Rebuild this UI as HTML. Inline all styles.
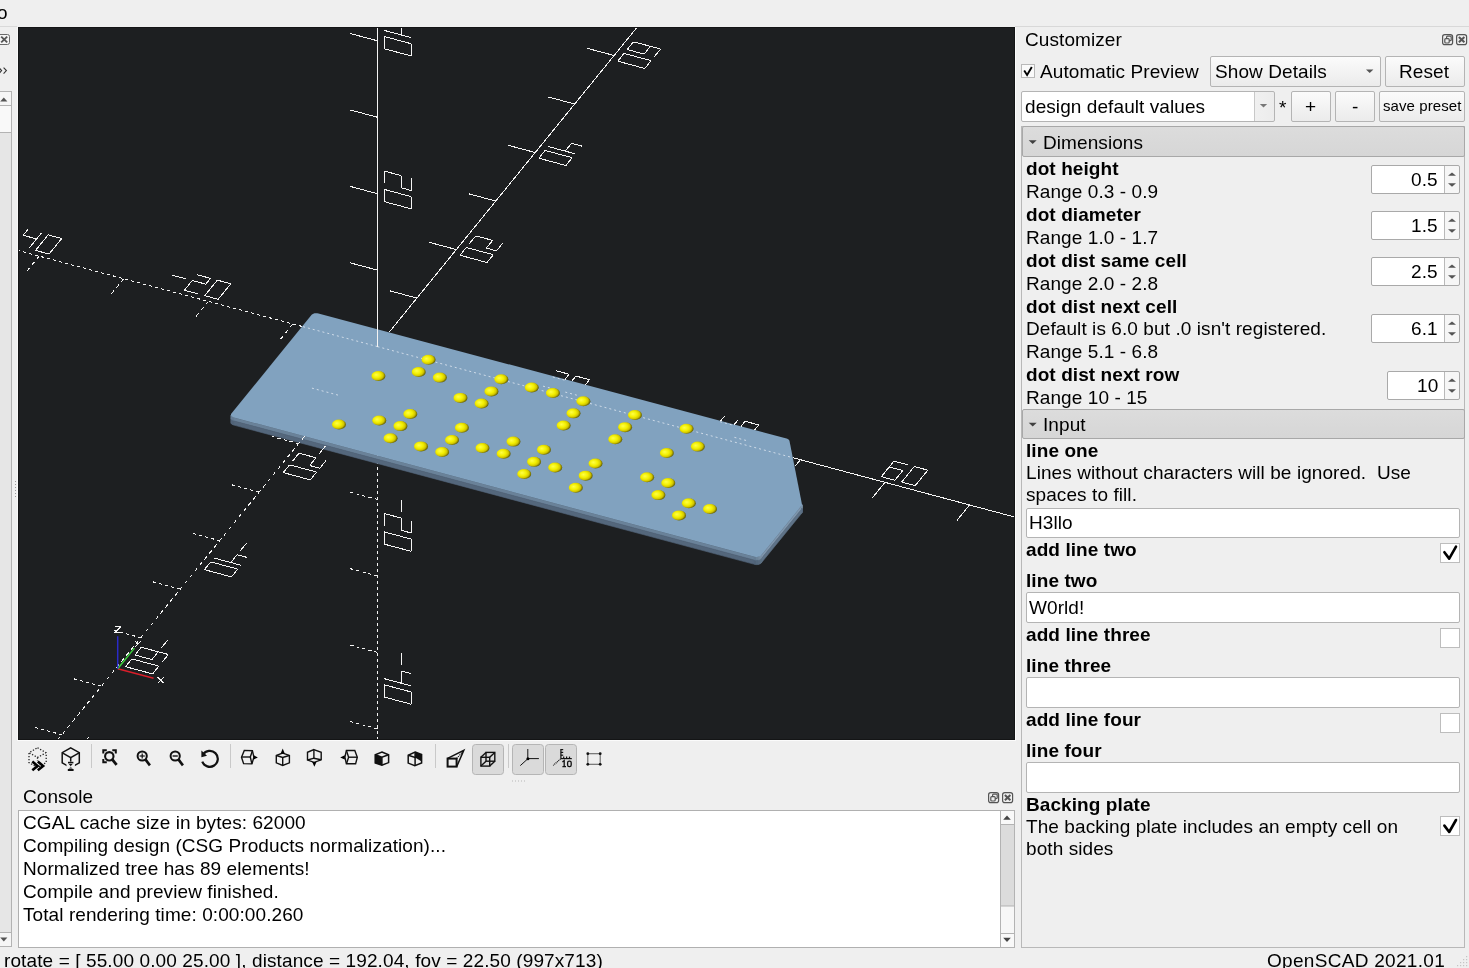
<!DOCTYPE html>
<html><head><meta charset="utf-8">
<style>
html,body{margin:0;padding:0;width:1469px;height:968px;overflow:hidden;background:#efefef;}
body{position:relative;font-family:"Liberation Sans",sans-serif;color:#000;}
.t{position:absolute;font-size:19px;line-height:23px;white-space:pre;letter-spacing:0.08px;will-change:transform;}
.b{font-weight:bold;}
.abs{position:absolute;box-sizing:border-box;}
.btn{position:absolute;box-sizing:border-box;border:1px solid #b4b4b4;border-radius:2px;background:linear-gradient(#fbfbfb,#ebebeb);}
.field{position:absolute;box-sizing:border-box;border:1px solid #b4b4b4;border-radius:2px;background:#fff;}
.chk{position:absolute;box-sizing:border-box;border:1px solid #bdbdbd;background:#fff;}
.grp{position:absolute;box-sizing:border-box;border:1px solid #a8a8a8;border-radius:2px;background:linear-gradient(#dcdcdc,#d6d6d6);}
svg{position:absolute;overflow:visible;}
.spin{position:absolute;box-sizing:border-box;border:1px solid #a9a9a9;border-radius:2px;background:linear-gradient(90deg,#fff 0,#fff calc(100% - 15px),#b9b9b9 calc(100% - 15px),#b9b9b9 calc(100% - 14px),#f6f6f6 calc(100% - 14px));font-size:19px;line-height:23px;}
.spin span{position:absolute;right:21px;top:2px;letter-spacing:0.08px;will-change:transform;}
</style></head><body>
<!-- top partial title -->
<div class="t" style="left:-3px;top:1px;">o</div>

<!-- left strip -->
<div class="abs" style="left:0;top:26px;width:17px;height:1px;background:#d9d9d9;"></div>
<svg width="20" height="968" style="left:0;top:0;position:absolute">
<rect x="-3.5" y="34.5" width="13" height="10" rx="2" fill="#f4f4f4" stroke="#6a6a6a" stroke-width="1"/>
<g stroke="#555" stroke-width="1.8"><line x1="1.2" y1="36.6" x2="7.2" y2="42.4"/><line x1="7.2" y1="36.6" x2="1.2" y2="42.4"/></g>
<g stroke="#333" stroke-width="1.1" fill="none"><polyline points="-1,67.6 1.6,70.6 -1,73.6"/><polyline points="3.6,67.6 6.4,70.6 3.6,73.6"/></g>
<rect x="-1" y="91.5" width="12.5" height="855" fill="#e6e6e6" stroke="#b3b3b3" stroke-width="1"/>
<rect x="-1" y="91.5" width="12.5" height="14" fill="#f6f6f6" stroke="#b3b3b3" stroke-width="1"/>
<polygon points="0.2,101.6 7.4,101.6 3.8,97.6" fill="#555"/>
<rect x="-1" y="105.5" width="12.5" height="27" fill="#f9f9f9" stroke="#b3b3b3" stroke-width="1"/>
<rect x="-1" y="932.5" width="12.5" height="14" fill="#f6f6f6" stroke="#b3b3b3" stroke-width="1"/>
<polygon points="0.2,937.6 7.4,937.6 3.8,941.6" fill="#555"/>
<g fill="#9a9a9a"><rect x="15" y="481" width="1" height="1"/><rect x="15" y="484" width="1" height="1"/><rect x="15" y="487" width="1" height="1"/><rect x="15" y="490" width="1" height="1"/><rect x="15" y="493" width="1" height="1"/><rect x="15" y="496" width="1" height="1"/></g>
</svg>

<!-- viewport -->
<div class="abs" style="left:18px;top:27px;width:997px;height:713px;background:#1d1f21;overflow:hidden;">
<svg width="997" height="713" style="left:0;top:0">
<defs><radialGradient id="dg" cx="0.4" cy="0.44" fx="0.34" fy="0.38" r="0.66">
<stop offset="0" stop-color="#ffff48"/><stop offset="0.45" stop-color="#f2ee00"/><stop offset="0.7" stop-color="#d2c600"/><stop offset="0.88" stop-color="#767000"/><stop offset="1" stop-color="#3a3a12"/></radialGradient>
<linearGradient id="fg" x1="0" y1="0" x2="0" y2="1"><stop offset="0" stop-color="#7b91a8"/><stop offset="1" stop-color="#5e7085"/></linearGradient>
</defs>
<style>.a{stroke:#f4f4f4;stroke-width:1;fill:none;shape-rendering:crispEdges}.d{stroke-dasharray:3 3}.zf{stroke:#e8eef5;stroke-width:1;fill:none;stroke-dasharray:2 3;opacity:0.75}</style>
<line x1="359.47" y1="319.60" x2="359.47" y2="1787.72" class="a" stroke-dasharray="3.00 3.00"/>
<line x1="359.47" y1="396.05" x2="332.39" y2="388.81" class="a" stroke-dasharray="3.11 3.11"/>
<line x1="359.47" y1="472.50" x2="332.39" y2="465.26" class="a" stroke-dasharray="3.11 3.11"/>
<line x1="383.15" y1="472.72" x2="383.15" y2="484.95" class="a" />
<line x1="393.30" y1="493.78" x2="393.30" y2="506.01" class="a" />
<line x1="393.30" y1="506.01" x2="383.15" y2="503.30" class="a" />
<line x1="383.15" y1="503.30" x2="383.15" y2="491.06" class="a" />
<line x1="383.15" y1="491.06" x2="366.23" y2="486.54" class="a" />
<line x1="366.23" y1="486.54" x2="366.23" y2="498.77" class="a" />
<line x1="366.23" y1="504.89" x2="393.30" y2="512.13" class="a" />
<line x1="393.30" y1="512.13" x2="393.30" y2="524.36" class="a" />
<line x1="393.30" y1="524.36" x2="366.23" y2="517.12" class="a" />
<line x1="366.23" y1="517.12" x2="366.23" y2="504.89" class="a" />
<line x1="359.47" y1="548.95" x2="332.39" y2="541.71" class="a" stroke-dasharray="3.11 3.11"/>
<line x1="359.47" y1="625.39" x2="332.39" y2="618.15" class="a" stroke-dasharray="3.11 3.11"/>
<line x1="383.15" y1="625.61" x2="383.15" y2="637.85" class="a" />
<line x1="393.30" y1="646.68" x2="383.15" y2="643.96" class="a" />
<line x1="383.15" y1="643.96" x2="383.15" y2="656.19" class="a" />
<line x1="393.30" y1="658.91" x2="366.23" y2="651.67" class="a" />
<line x1="366.23" y1="657.78" x2="393.30" y2="665.02" class="a" />
<line x1="393.30" y1="665.02" x2="393.30" y2="677.26" class="a" />
<line x1="393.30" y1="677.26" x2="366.23" y2="670.02" class="a" />
<line x1="366.23" y1="670.02" x2="366.23" y2="657.78" class="a" />
<line x1="359.47" y1="701.84" x2="332.39" y2="694.60" class="a" stroke-dasharray="3.11 3.11"/>
<line x1="359.47" y1="778.29" x2="332.39" y2="771.05" class="a" stroke-dasharray="3.11 3.11"/>
<line x1="383.15" y1="778.51" x2="383.15" y2="790.74" class="a" />
<line x1="393.30" y1="811.81" x2="393.30" y2="799.57" class="a" />
<line x1="393.30" y1="799.57" x2="366.23" y2="792.33" class="a" />
<line x1="366.23" y1="792.33" x2="366.23" y2="804.57" class="a" />
<line x1="366.23" y1="804.57" x2="383.15" y2="809.09" class="a" />
<line x1="383.15" y1="809.09" x2="383.15" y2="796.86" class="a" />
<line x1="366.23" y1="810.68" x2="393.30" y2="817.92" class="a" />
<line x1="393.30" y1="817.92" x2="393.30" y2="830.15" class="a" />
<line x1="393.30" y1="830.15" x2="366.23" y2="822.91" class="a" />
<line x1="366.23" y1="822.91" x2="366.23" y2="810.68" class="a" />
<line x1="359.47" y1="854.74" x2="332.39" y2="847.50" class="a" stroke-dasharray="3.11 3.11"/>
<line x1="359.47" y1="931.19" x2="332.39" y2="923.95" class="a" stroke-dasharray="3.11 3.11"/>
<line x1="383.15" y1="931.41" x2="383.15" y2="943.64" class="a" />
<line x1="366.23" y1="945.23" x2="393.30" y2="952.47" class="a" />
<line x1="393.30" y1="952.47" x2="393.30" y2="964.70" class="a" />
<line x1="393.30" y1="964.70" x2="366.23" y2="957.46" class="a" />
<line x1="366.23" y1="957.46" x2="366.23" y2="945.23" class="a" />
<line x1="383.15" y1="949.76" x2="383.15" y2="961.99" class="a" />
<line x1="366.23" y1="963.58" x2="393.30" y2="970.82" class="a" />
<line x1="393.30" y1="970.82" x2="393.30" y2="983.05" class="a" />
<line x1="393.30" y1="983.05" x2="366.23" y2="975.81" class="a" />
<line x1="366.23" y1="975.81" x2="366.23" y2="963.58" class="a" />
<line x1="359.47" y1="1007.64" x2="332.39" y2="1000.40" class="a" stroke-dasharray="3.11 3.11"/>
<line x1="359.47" y1="1084.09" x2="332.39" y2="1076.85" class="a" stroke-dasharray="3.11 3.11"/>
<line x1="383.15" y1="1084.31" x2="383.15" y2="1096.54" class="a" />
<line x1="366.23" y1="1110.36" x2="393.30" y2="1117.60" class="a" />
<line x1="366.23" y1="1116.48" x2="393.30" y2="1123.72" class="a" />
<line x1="393.30" y1="1123.72" x2="393.30" y2="1135.95" class="a" />
<line x1="393.30" y1="1135.95" x2="366.23" y2="1128.71" class="a" />
<line x1="366.23" y1="1128.71" x2="366.23" y2="1116.48" class="a" />
<line x1="366.23" y1="1134.82" x2="393.30" y2="1142.06" class="a" />
<line x1="393.30" y1="1142.06" x2="393.30" y2="1154.30" class="a" />
<line x1="393.30" y1="1154.30" x2="366.23" y2="1147.06" class="a" />
<line x1="366.23" y1="1147.06" x2="366.23" y2="1134.82" class="a" />
<line x1="359.47" y1="1160.54" x2="332.39" y2="1153.30" class="a" stroke-dasharray="3.11 3.11"/>
<line x1="359.47" y1="1236.99" x2="332.39" y2="1229.74" class="a" stroke-dasharray="3.11 3.11"/>
<line x1="383.15" y1="1237.20" x2="383.15" y2="1249.44" class="a" />
<line x1="366.23" y1="1263.26" x2="393.30" y2="1270.50" class="a" />
<line x1="393.30" y1="1276.61" x2="393.30" y2="1288.85" class="a" />
<line x1="393.30" y1="1288.85" x2="383.15" y2="1286.13" class="a" />
<line x1="383.15" y1="1286.13" x2="383.15" y2="1273.90" class="a" />
<line x1="383.15" y1="1273.90" x2="366.23" y2="1269.37" class="a" />
<line x1="366.23" y1="1269.37" x2="366.23" y2="1281.61" class="a" />
<line x1="366.23" y1="1287.72" x2="393.30" y2="1294.96" class="a" />
<line x1="393.30" y1="1294.96" x2="393.30" y2="1307.19" class="a" />
<line x1="393.30" y1="1307.19" x2="366.23" y2="1299.95" class="a" />
<line x1="366.23" y1="1299.95" x2="366.23" y2="1287.72" class="a" />
<line x1="359.47" y1="1313.43" x2="332.39" y2="1306.19" class="a" stroke-dasharray="3.11 3.11"/>
<line x1="359.47" y1="1389.88" x2="332.39" y2="1382.64" class="a" stroke-dasharray="3.11 3.11"/>
<line x1="383.15" y1="1390.10" x2="383.15" y2="1402.33" class="a" />
<line x1="366.23" y1="1416.16" x2="393.30" y2="1423.40" class="a" />
<line x1="393.30" y1="1429.51" x2="383.15" y2="1426.80" class="a" />
<line x1="383.15" y1="1426.80" x2="383.15" y2="1439.03" class="a" />
<line x1="393.30" y1="1441.74" x2="366.23" y2="1434.50" class="a" />
<line x1="366.23" y1="1440.62" x2="393.30" y2="1447.86" class="a" />
<line x1="393.30" y1="1447.86" x2="393.30" y2="1460.09" class="a" />
<line x1="393.30" y1="1460.09" x2="366.23" y2="1452.85" class="a" />
<line x1="366.23" y1="1452.85" x2="366.23" y2="1440.62" class="a" />
<line x1="359.47" y1="1466.33" x2="332.39" y2="1459.09" class="a" stroke-dasharray="3.11 3.11"/>
<line x1="359.47" y1="1542.78" x2="332.39" y2="1535.54" class="a" stroke-dasharray="3.11 3.11"/>
<line x1="383.15" y1="1543.00" x2="383.15" y2="1555.23" class="a" />
<line x1="366.23" y1="1569.05" x2="393.30" y2="1576.29" class="a" />
<line x1="393.30" y1="1594.64" x2="393.30" y2="1582.41" class="a" />
<line x1="393.30" y1="1582.41" x2="366.23" y2="1575.17" class="a" />
<line x1="366.23" y1="1575.17" x2="366.23" y2="1587.40" class="a" />
<line x1="366.23" y1="1587.40" x2="383.15" y2="1591.93" class="a" />
<line x1="383.15" y1="1591.93" x2="383.15" y2="1579.69" class="a" />
<line x1="366.23" y1="1593.52" x2="393.30" y2="1600.76" class="a" />
<line x1="393.30" y1="1600.76" x2="393.30" y2="1612.99" class="a" />
<line x1="393.30" y1="1612.99" x2="366.23" y2="1605.75" class="a" />
<line x1="366.23" y1="1605.75" x2="366.23" y2="1593.52" class="a" />
<line x1="359.47" y1="1619.23" x2="332.39" y2="1611.99" class="a" stroke-dasharray="3.11 3.11"/>
<line x1="359.47" y1="1695.68" x2="332.39" y2="1688.44" class="a" stroke-dasharray="3.11 3.11"/>
<line x1="383.15" y1="1695.90" x2="383.15" y2="1708.13" class="a" />
<line x1="366.23" y1="1721.95" x2="393.30" y2="1729.19" class="a" />
<line x1="366.23" y1="1728.07" x2="393.30" y2="1735.31" class="a" />
<line x1="393.30" y1="1735.31" x2="393.30" y2="1747.54" class="a" />
<line x1="393.30" y1="1747.54" x2="366.23" y2="1740.30" class="a" />
<line x1="366.23" y1="1740.30" x2="366.23" y2="1728.07" class="a" />
<line x1="383.15" y1="1732.59" x2="383.15" y2="1744.82" class="a" />
<line x1="366.23" y1="1746.41" x2="393.30" y2="1753.65" class="a" />
<line x1="393.30" y1="1753.65" x2="393.30" y2="1765.89" class="a" />
<line x1="393.30" y1="1765.89" x2="366.23" y2="1758.65" class="a" />
<line x1="366.23" y1="1758.65" x2="366.23" y2="1746.41" class="a" />
<polygon points="212.93,388.05 213.22,388.80 213.22,392.24 212.93,391.49" fill="#6a8299" stroke="#6a8299" stroke-width="0.6"/>
<polygon points="212.93,391.49 213.22,392.24 213.22,396.45 212.93,395.69" fill="#54677c" stroke="#54677c" stroke-width="0.6"/>
<polygon points="213.22,388.80 213.84,389.48 213.84,392.92 213.22,392.24" fill="#6a8299" stroke="#6a8299" stroke-width="0.6"/>
<polygon points="213.22,392.24 213.84,392.92 213.84,397.13 213.22,396.45" fill="#54677c" stroke="#54677c" stroke-width="0.6"/>
<polygon points="213.84,389.48 214.74,390.05 214.74,393.49 213.84,392.92" fill="#6a8299" stroke="#6a8299" stroke-width="0.6"/>
<polygon points="213.84,392.92 214.74,393.49 214.74,397.69 213.84,397.13" fill="#54677c" stroke="#54677c" stroke-width="0.6"/>
<polygon points="214.74,390.05 215.87,390.46 215.87,393.90 214.74,393.49" fill="#6a8299" stroke="#6a8299" stroke-width="0.6"/>
<polygon points="214.74,393.49 215.87,393.90 215.87,398.11 214.74,397.69" fill="#54677c" stroke="#54677c" stroke-width="0.6"/>
<polygon points="215.87,390.46 736.48,529.70 736.48,533.15 215.87,393.90" fill="#6a8299" stroke="#6a8299" stroke-width="0.6"/>
<polygon points="215.87,393.90 736.48,533.15 736.48,537.35 215.87,398.11" fill="#54677c" stroke="#54677c" stroke-width="0.6"/>
<polygon points="736.48,529.70 737.76,529.94 737.76,533.38 736.48,533.15" fill="#6a8299" stroke="#6a8299" stroke-width="0.6"/>
<polygon points="736.48,533.15 737.76,533.38 737.76,537.58 736.48,537.35" fill="#54677c" stroke="#54677c" stroke-width="0.6"/>
<polygon points="737.76,529.94 739.10,529.97 739.10,533.41 737.76,533.38" fill="#6d859c" stroke="#6d859c" stroke-width="0.6"/>
<polygon points="737.76,533.38 739.10,533.41 739.10,537.61 737.76,537.58" fill="#56697e" stroke="#56697e" stroke-width="0.6"/>
<polygon points="739.10,529.97 740.40,529.80 740.40,533.24 739.10,533.41" fill="#7289a0" stroke="#7289a0" stroke-width="0.6"/>
<polygon points="739.10,533.41 740.40,533.24 740.40,537.45 739.10,537.61" fill="#586b80" stroke="#586b80" stroke-width="0.6"/>
<polygon points="740.40,529.80 741.59,529.45 741.59,532.89 740.40,533.24" fill="#778fa6" stroke="#778fa6" stroke-width="0.6"/>
<polygon points="740.40,533.24 741.59,532.89 741.59,537.09 740.40,537.45" fill="#5b6f84" stroke="#5b6f84" stroke-width="0.6"/>
<polygon points="741.59,529.45 742.58,528.93 742.58,532.37 741.59,532.89" fill="#7c93aa" stroke="#7c93aa" stroke-width="0.6"/>
<polygon points="741.59,532.89 742.58,532.37 742.58,536.57 741.59,537.09" fill="#5d7186" stroke="#5d7186" stroke-width="0.6"/>
<polygon points="742.58,528.93 743.30,528.28 743.30,531.72 742.58,532.37" fill="#7f96ad" stroke="#7f96ad" stroke-width="0.6"/>
<polygon points="742.58,532.37 743.30,531.72 743.30,535.93 742.58,536.57" fill="#5f7388" stroke="#5f7388" stroke-width="0.6"/>
<polygon points="743.30,528.28 783.51,478.82 783.51,482.26 743.30,531.72" fill="#7f96ad" stroke="#7f96ad" stroke-width="0.6"/>
<polygon points="743.30,531.72 783.51,482.26 783.51,486.46 743.30,535.93" fill="#5f7388" stroke="#5f7388" stroke-width="0.6"/>
<polygon points="783.51,478.82 783.69,478.57 783.69,482.01 783.51,482.26" fill="#7f96ad" stroke="#7f96ad" stroke-width="0.6"/>
<polygon points="783.51,482.26 783.69,482.01 783.69,486.22 783.51,486.46" fill="#5f7388" stroke="#5f7388" stroke-width="0.6"/>
<polygon points="783.69,478.57 783.83,478.31 783.83,481.75 783.69,482.01" fill="#7f96ad" stroke="#7f96ad" stroke-width="0.6"/>
<polygon points="783.69,482.01 783.83,481.75 783.83,485.96 783.69,486.22" fill="#5f7388" stroke="#5f7388" stroke-width="0.6"/>
<polygon points="783.83,478.31 783.93,478.05 783.93,481.49 783.83,481.75" fill="#7e95ac" stroke="#7e95ac" stroke-width="0.6"/>
<polygon points="783.83,481.75 783.93,481.49 783.93,485.69 783.83,485.96" fill="#5e7287" stroke="#5e7287" stroke-width="0.6"/>
<polygon points="783.93,478.05 783.98,477.78 783.98,481.22 783.93,481.49" fill="#7d94ab" stroke="#7d94ab" stroke-width="0.6"/>
<polygon points="783.93,481.49 783.98,481.22 783.98,485.43 783.93,485.69" fill="#5e7287" stroke="#5e7287" stroke-width="0.6"/>
<polygon points="783.98,477.78 783.99,477.51 783.99,480.95 783.98,481.22" fill="#7c93aa" stroke="#7c93aa" stroke-width="0.6"/>
<polygon points="783.98,481.22 783.99,480.95 783.99,485.16 783.98,485.43" fill="#5d7186" stroke="#5d7186" stroke-width="0.6"/>
<polygon points="213.39,386.55 212.99,387.28 212.93,388.05 213.22,388.80 213.84,389.48 214.74,390.05 215.87,390.46 736.48,529.70 737.76,529.94 739.10,529.97 740.40,529.80 741.59,529.45 742.58,528.93 743.30,528.28 783.51,478.82 783.69,478.57 783.83,478.31 783.93,478.05 783.98,477.78 783.99,477.51 783.96,477.24 771.50,413.93 771.33,413.44 771.02,412.98 770.57,412.55 770.00,412.16 769.33,411.85 768.57,411.60 300.47,286.40 299.20,286.17 297.86,286.13 296.55,286.30 295.36,286.65 294.37,287.17 293.65,287.82" fill="#81a2bf"/>
<line x1="359.47" y1="319.60" x2="775.07" y2="430.76" class="zf" />
<line x1="359.47" y1="319.60" x2="284.38" y2="299.52" class="zf d" />
<line x1="320.02" y1="368.11" x2="292.95" y2="360.87" class="zf d" />
<line x1="546.44" y1="353.07" x2="532.91" y2="349.45" class="zf" />
<line x1="525.02" y1="359.15" x2="538.55" y2="362.77" class="zf" />
<line x1="558.85" y1="368.20" x2="545.32" y2="364.58" class="zf" />
<line x1="702.07" y1="394.70" x2="715.61" y2="398.32" class="zf" />
<line x1="728.02" y1="413.45" x2="714.49" y2="409.83" class="zf" />
<line x1="775.07" y1="430.76" x2="1983.79" y2="754.05" class="a" />
<line x1="371.30" y1="305.04" x2="1116.90" y2="-612.08" class="a" />
<line x1="359.47" y1="319.60" x2="359.47" y2="-1148.52" class="a" />
<line x1="284.38" y1="299.52" x2="-1264.86" y2="-114.85" class="a" stroke-dasharray="3.11 3.11"/>
<line x1="286.48" y1="409.37" x2="-397.97" y2="1251.28" class="a" stroke-dasharray="3.87 3.87"/>
<line x1="398.91" y1="271.08" x2="371.84" y2="263.84" class="a" />
<line x1="359.47" y1="243.15" x2="332.39" y2="235.91" class="a" />
<line x1="274.88" y1="296.98" x2="262.26" y2="312.50" class="a" stroke-dasharray="3.87 3.87"/>
<line x1="438.35" y1="222.57" x2="411.28" y2="215.33" class="a" />
<line x1="359.47" y1="166.70" x2="332.39" y2="159.46" class="a" />
<line x1="537.64" y1="343.63" x2="551.17" y2="347.25" class="a" />
<line x1="551.17" y1="347.25" x2="546.97" y2="352.42" class="a" />
<line x1="553.90" y1="354.03" x2="557.94" y2="349.06" class="a" />
<line x1="557.94" y1="349.06" x2="571.47" y2="352.68" class="a" />
<line x1="571.47" y1="352.68" x2="567.44" y2="357.65" class="a" />
<line x1="484.80" y1="216.09" x2="478.49" y2="223.86" class="a" />
<line x1="478.49" y1="223.86" x2="468.34" y2="221.14" class="a" />
<line x1="468.34" y1="221.14" x2="474.65" y2="213.38" class="a" />
<line x1="474.65" y1="213.38" x2="457.74" y2="208.86" class="a" />
<line x1="457.74" y1="208.86" x2="451.43" y2="216.62" class="a" />
<line x1="448.27" y1="220.50" x2="475.34" y2="227.74" class="a" />
<line x1="475.34" y1="227.74" x2="469.03" y2="235.50" class="a" />
<line x1="469.03" y1="235.50" x2="441.96" y2="228.26" class="a" />
<line x1="441.96" y1="228.26" x2="448.27" y2="220.50" class="a" />
<line x1="393.30" y1="151.29" x2="393.30" y2="163.52" class="a" />
<line x1="393.30" y1="163.52" x2="383.15" y2="160.80" class="a" />
<line x1="383.15" y1="160.80" x2="383.15" y2="148.57" class="a" />
<line x1="383.15" y1="148.57" x2="366.23" y2="144.05" class="a" />
<line x1="366.23" y1="144.05" x2="366.23" y2="156.28" class="a" />
<line x1="366.23" y1="162.40" x2="393.30" y2="169.64" class="a" />
<line x1="393.30" y1="169.64" x2="393.30" y2="181.87" class="a" />
<line x1="393.30" y1="181.87" x2="366.23" y2="174.63" class="a" />
<line x1="366.23" y1="174.63" x2="366.23" y2="162.40" class="a" />
<line x1="190.30" y1="274.35" x2="177.68" y2="289.88" class="a" stroke-dasharray="3.87 3.87"/>
<line x1="280.58" y1="416.63" x2="253.51" y2="409.39" class="a" stroke-dasharray="3.11 3.11"/>
<line x1="153.98" y1="248.10" x2="167.51" y2="251.72" class="a" />
<line x1="179.01" y1="247.71" x2="192.54" y2="251.33" class="a" />
<line x1="192.54" y1="251.33" x2="187.81" y2="257.15" class="a" />
<line x1="187.81" y1="257.15" x2="174.28" y2="253.53" class="a" />
<line x1="174.28" y1="253.53" x2="166.39" y2="263.23" class="a" />
<line x1="166.39" y1="263.23" x2="179.92" y2="266.85" class="a" />
<line x1="186.69" y1="268.66" x2="199.31" y2="253.14" class="a" />
<line x1="199.31" y1="253.14" x2="212.84" y2="256.76" class="a" />
<line x1="212.84" y1="256.76" x2="200.22" y2="272.28" class="a" />
<line x1="200.22" y1="272.28" x2="186.69" y2="268.66" class="a" />
<line x1="307.42" y1="419.08" x2="301.11" y2="426.84" class="a" />
<line x1="308.11" y1="433.44" x2="301.79" y2="441.20" class="a" />
<line x1="301.79" y1="441.20" x2="291.64" y2="438.49" class="a" />
<line x1="291.64" y1="438.49" x2="297.96" y2="430.73" class="a" />
<line x1="297.96" y1="430.73" x2="281.04" y2="426.20" class="a" />
<line x1="281.04" y1="426.20" x2="274.73" y2="433.96" class="a" />
<line x1="271.57" y1="437.84" x2="298.64" y2="445.08" class="a" />
<line x1="298.64" y1="445.08" x2="292.33" y2="452.85" class="a" />
<line x1="292.33" y1="452.85" x2="265.26" y2="445.61" class="a" />
<line x1="265.26" y1="445.61" x2="271.57" y2="437.84" class="a" />
<line x1="477.79" y1="174.06" x2="450.72" y2="166.81" class="a" />
<line x1="359.47" y1="90.25" x2="332.39" y2="83.01" class="a" />
<line x1="105.72" y1="251.73" x2="93.09" y2="267.26" class="a" stroke-dasharray="3.87 3.87"/>
<line x1="241.14" y1="465.14" x2="214.07" y2="457.90" class="a" stroke-dasharray="3.11 3.11"/>
<line x1="517.23" y1="125.54" x2="490.16" y2="118.30" class="a" />
<line x1="359.47" y1="13.80" x2="332.39" y2="6.56" class="a" />
<line x1="706.81" y1="388.87" x2="702.60" y2="394.05" class="a" />
<line x1="720.34" y1="392.49" x2="716.30" y2="397.46" class="a" />
<line x1="723.07" y1="399.27" x2="727.11" y2="394.30" class="a" />
<line x1="727.11" y1="394.30" x2="740.64" y2="397.92" class="a" />
<line x1="740.64" y1="397.92" x2="736.60" y2="402.89" class="a" />
<line x1="563.69" y1="119.07" x2="553.54" y2="116.35" class="a" />
<line x1="553.54" y1="116.35" x2="547.23" y2="124.11" class="a" />
<line x1="557.38" y1="126.83" x2="530.31" y2="119.59" class="a" />
<line x1="527.15" y1="123.47" x2="554.22" y2="130.71" class="a" />
<line x1="554.22" y1="130.71" x2="547.91" y2="138.47" class="a" />
<line x1="547.91" y1="138.47" x2="520.84" y2="131.23" class="a" />
<line x1="520.84" y1="131.23" x2="527.15" y2="123.47" class="a" />
<line x1="393.30" y1="-1.61" x2="383.15" y2="-4.32" class="a" />
<line x1="383.15" y1="-4.32" x2="383.15" y2="7.91" class="a" />
<line x1="393.30" y1="10.62" x2="366.23" y2="3.38" class="a" />
<line x1="366.23" y1="9.50" x2="393.30" y2="16.74" class="a" />
<line x1="393.30" y1="16.74" x2="393.30" y2="28.97" class="a" />
<line x1="393.30" y1="28.97" x2="366.23" y2="21.73" class="a" />
<line x1="366.23" y1="21.73" x2="366.23" y2="9.50" class="a" />
<line x1="21.14" y1="229.11" x2="8.51" y2="244.64" class="a" stroke-dasharray="3.87 3.87"/>
<line x1="201.70" y1="513.66" x2="174.63" y2="506.42" class="a" stroke-dasharray="3.11 3.11"/>
<line x1="-15.19" y1="202.86" x2="-1.65" y2="206.48" class="a" />
<line x1="9.85" y1="202.46" x2="5.11" y2="208.29" class="a" />
<line x1="5.11" y1="208.29" x2="18.65" y2="211.90" class="a" />
<line x1="23.38" y1="206.08" x2="10.76" y2="221.61" class="a" />
<line x1="17.52" y1="223.42" x2="30.15" y2="207.89" class="a" />
<line x1="30.15" y1="207.89" x2="43.68" y2="211.51" class="a" />
<line x1="43.68" y1="211.51" x2="31.06" y2="227.04" class="a" />
<line x1="31.06" y1="227.04" x2="17.52" y2="223.42" class="a" />
<line x1="228.54" y1="516.11" x2="222.23" y2="523.87" class="a" />
<line x1="229.22" y1="530.47" x2="219.07" y2="527.76" class="a" />
<line x1="219.07" y1="527.76" x2="212.76" y2="535.52" class="a" />
<line x1="222.91" y1="538.23" x2="195.85" y2="530.99" class="a" />
<line x1="192.69" y1="534.87" x2="219.76" y2="542.11" class="a" />
<line x1="219.76" y1="542.11" x2="213.45" y2="549.88" class="a" />
<line x1="213.45" y1="549.88" x2="186.38" y2="542.64" class="a" />
<line x1="186.38" y1="542.64" x2="192.69" y2="534.87" class="a" />
<line x1="782.38" y1="432.71" x2="776.83" y2="439.55" class="a" />
<line x1="556.67" y1="77.03" x2="529.60" y2="69.79" class="a" />
<line x1="359.47" y1="-62.64" x2="332.39" y2="-69.89" class="a" />
<line x1="-63.45" y1="206.49" x2="-76.07" y2="222.01" class="a" stroke-dasharray="3.87 3.87"/>
<line x1="162.26" y1="562.17" x2="135.19" y2="554.93" class="a" stroke-dasharray="3.11 3.11"/>
<line x1="866.96" y1="455.34" x2="854.34" y2="470.86" class="a" />
<line x1="596.12" y1="28.51" x2="569.04" y2="21.27" class="a" />
<line x1="359.47" y1="-139.09" x2="332.39" y2="-146.33" class="a" />
<line x1="889.51" y1="437.74" x2="875.97" y2="434.12" class="a" />
<line x1="875.97" y1="434.12" x2="863.35" y2="449.65" class="a" />
<line x1="863.35" y1="449.65" x2="876.88" y2="453.26" class="a" />
<line x1="876.88" y1="453.26" x2="884.77" y2="443.56" class="a" />
<line x1="884.77" y1="443.56" x2="871.24" y2="439.94" class="a" />
<line x1="883.65" y1="455.07" x2="896.27" y2="439.55" class="a" />
<line x1="896.27" y1="439.55" x2="909.81" y2="443.17" class="a" />
<line x1="909.81" y1="443.17" x2="897.18" y2="458.69" class="a" />
<line x1="897.18" y1="458.69" x2="883.65" y2="455.07" class="a" />
<line x1="636.26" y1="29.80" x2="642.57" y2="22.04" class="a" />
<line x1="642.57" y1="22.04" x2="615.50" y2="14.80" class="a" />
<line x1="615.50" y1="14.80" x2="609.19" y2="22.56" class="a" />
<line x1="609.19" y1="22.56" x2="626.11" y2="27.08" class="a" />
<line x1="626.11" y1="27.08" x2="632.42" y2="19.32" class="a" />
<line x1="606.04" y1="26.44" x2="633.10" y2="33.68" class="a" />
<line x1="633.10" y1="33.68" x2="626.79" y2="41.44" class="a" />
<line x1="626.79" y1="41.44" x2="599.73" y2="34.20" class="a" />
<line x1="599.73" y1="34.20" x2="606.04" y2="26.44" class="a" />
<line x1="393.30" y1="-142.28" x2="393.30" y2="-154.51" class="a" />
<line x1="393.30" y1="-154.51" x2="366.23" y2="-161.75" class="a" />
<line x1="366.23" y1="-161.75" x2="366.23" y2="-149.52" class="a" />
<line x1="366.23" y1="-149.52" x2="383.15" y2="-144.99" class="a" />
<line x1="383.15" y1="-144.99" x2="383.15" y2="-157.22" class="a" />
<line x1="366.23" y1="-143.40" x2="393.30" y2="-136.16" class="a" />
<line x1="393.30" y1="-136.16" x2="393.30" y2="-123.93" class="a" />
<line x1="393.30" y1="-123.93" x2="366.23" y2="-131.17" class="a" />
<line x1="366.23" y1="-131.17" x2="366.23" y2="-143.40" class="a" />
<line x1="-148.03" y1="183.86" x2="-160.65" y2="199.39" class="a" stroke-dasharray="3.87 3.87"/>
<line x1="122.82" y1="610.69" x2="95.74" y2="603.45" class="a" stroke-dasharray="3.11 3.11"/>
<line x1="-184.35" y1="157.61" x2="-170.82" y2="161.23" class="a" />
<line x1="-145.79" y1="160.84" x2="-159.32" y2="157.22" class="a" />
<line x1="-159.32" y1="157.22" x2="-171.94" y2="172.74" class="a" />
<line x1="-171.94" y1="172.74" x2="-158.41" y2="176.36" class="a" />
<line x1="-158.41" y1="176.36" x2="-150.52" y2="166.66" class="a" />
<line x1="-150.52" y1="166.66" x2="-164.05" y2="163.04" class="a" />
<line x1="-151.64" y1="178.17" x2="-139.02" y2="162.65" class="a" />
<line x1="-139.02" y1="162.65" x2="-125.49" y2="166.27" class="a" />
<line x1="-125.49" y1="166.27" x2="-138.11" y2="181.79" class="a" />
<line x1="-138.11" y1="181.79" x2="-151.64" y2="178.17" class="a" />
<line x1="149.66" y1="613.14" x2="143.34" y2="620.90" class="a" />
<line x1="144.03" y1="635.26" x2="150.34" y2="627.50" class="a" />
<line x1="150.34" y1="627.50" x2="123.27" y2="620.26" class="a" />
<line x1="123.27" y1="620.26" x2="116.96" y2="628.02" class="a" />
<line x1="116.96" y1="628.02" x2="133.88" y2="632.55" class="a" />
<line x1="133.88" y1="632.55" x2="140.19" y2="624.78" class="a" />
<line x1="113.81" y1="631.90" x2="140.87" y2="639.14" class="a" />
<line x1="140.87" y1="639.14" x2="134.56" y2="646.90" class="a" />
<line x1="134.56" y1="646.90" x2="107.50" y2="639.67" class="a" />
<line x1="107.50" y1="639.67" x2="113.81" y2="631.90" class="a" />
<line x1="951.55" y1="477.96" x2="938.92" y2="493.49" class="a" />
<line x1="635.56" y1="-20.00" x2="608.49" y2="-27.24" class="a" />
<line x1="359.47" y1="-215.54" x2="332.39" y2="-222.78" class="a" />
<line x1="-232.61" y1="161.24" x2="-245.24" y2="176.77" class="a" stroke-dasharray="3.87 3.87"/>
<line x1="83.38" y1="659.20" x2="56.30" y2="651.96" class="a" stroke-dasharray="3.11 3.11"/>
<line x1="1036.13" y1="500.58" x2="1023.50" y2="516.11" class="a" />
<line x1="675.00" y1="-68.52" x2="647.93" y2="-75.76" class="a" />
<line x1="359.47" y1="-291.99" x2="332.39" y2="-299.23" class="a" />
<line x1="1032.52" y1="494.89" x2="1045.14" y2="479.37" class="a" />
<line x1="1045.14" y1="479.37" x2="1058.67" y2="482.99" class="a" />
<line x1="1058.67" y1="482.99" x2="1046.05" y2="498.51" class="a" />
<line x1="1046.05" y1="498.51" x2="1032.52" y2="494.89" class="a" />
<line x1="1040.41" y1="485.19" x2="1053.94" y2="488.81" class="a" />
<line x1="1052.82" y1="500.32" x2="1065.44" y2="484.80" class="a" />
<line x1="1065.44" y1="484.80" x2="1078.97" y2="488.42" class="a" />
<line x1="1078.97" y1="488.42" x2="1066.35" y2="503.94" class="a" />
<line x1="1066.35" y1="503.94" x2="1052.82" y2="500.32" class="a" />
<line x1="694.39" y1="-82.23" x2="721.45" y2="-74.99" class="a" />
<line x1="721.45" y1="-74.99" x2="715.14" y2="-67.23" class="a" />
<line x1="715.14" y1="-67.23" x2="688.08" y2="-74.47" class="a" />
<line x1="688.08" y1="-74.47" x2="694.39" y2="-82.23" class="a" />
<line x1="711.30" y1="-77.71" x2="704.99" y2="-69.95" class="a" />
<line x1="684.92" y1="-70.59" x2="711.99" y2="-63.35" class="a" />
<line x1="711.99" y1="-63.35" x2="705.68" y2="-55.59" class="a" />
<line x1="705.68" y1="-55.59" x2="678.61" y2="-62.83" class="a" />
<line x1="678.61" y1="-62.83" x2="684.92" y2="-70.59" class="a" />
<line x1="366.23" y1="-314.64" x2="393.30" y2="-307.41" class="a" />
<line x1="393.30" y1="-307.41" x2="393.30" y2="-295.17" class="a" />
<line x1="393.30" y1="-295.17" x2="366.23" y2="-302.41" class="a" />
<line x1="366.23" y1="-302.41" x2="366.23" y2="-314.64" class="a" />
<line x1="383.15" y1="-310.12" x2="383.15" y2="-297.89" class="a" />
<line x1="366.23" y1="-296.30" x2="393.30" y2="-289.06" class="a" />
<line x1="393.30" y1="-289.06" x2="393.30" y2="-276.83" class="a" />
<line x1="393.30" y1="-276.83" x2="366.23" y2="-284.06" class="a" />
<line x1="366.23" y1="-284.06" x2="366.23" y2="-296.30" class="a" />
<line x1="-317.20" y1="138.62" x2="-329.82" y2="154.15" class="a" stroke-dasharray="3.87 3.87"/>
<line x1="43.93" y1="707.72" x2="16.86" y2="700.48" class="a" stroke-dasharray="3.11 3.11"/>
<line x1="-353.52" y1="112.36" x2="-339.99" y2="115.98" class="a" />
<line x1="-341.11" y1="127.50" x2="-328.49" y2="111.97" class="a" />
<line x1="-328.49" y1="111.97" x2="-314.95" y2="115.59" class="a" />
<line x1="-314.95" y1="115.59" x2="-327.57" y2="131.12" class="a" />
<line x1="-327.57" y1="131.12" x2="-341.11" y2="127.50" class="a" />
<line x1="-333.22" y1="117.79" x2="-319.69" y2="121.41" class="a" />
<line x1="-320.81" y1="132.93" x2="-308.19" y2="117.40" class="a" />
<line x1="-308.19" y1="117.40" x2="-294.65" y2="121.02" class="a" />
<line x1="-294.65" y1="121.02" x2="-307.27" y2="136.55" class="a" />
<line x1="-307.27" y1="136.55" x2="-320.81" y2="132.93" class="a" />
<line x1="70.77" y1="710.17" x2="64.46" y2="717.93" class="a" />
<line x1="44.39" y1="717.29" x2="71.46" y2="724.53" class="a" />
<line x1="71.46" y1="724.53" x2="65.15" y2="732.29" class="a" />
<line x1="65.15" y1="732.29" x2="38.08" y2="725.05" class="a" />
<line x1="38.08" y1="725.05" x2="44.39" y2="717.29" class="a" />
<line x1="61.31" y1="721.81" x2="55.00" y2="729.58" class="a" />
<line x1="34.92" y1="728.93" x2="61.99" y2="736.17" class="a" />
<line x1="61.99" y1="736.17" x2="55.68" y2="743.93" class="a" />
<line x1="55.68" y1="743.93" x2="28.61" y2="736.70" class="a" />
<line x1="28.61" y1="736.70" x2="34.92" y2="728.93" class="a" />
<line x1="1120.71" y1="523.20" x2="1108.09" y2="538.73" class="a" />
<line x1="714.44" y1="-117.03" x2="687.37" y2="-124.27" class="a" />
<line x1="359.47" y1="-368.44" x2="332.39" y2="-375.68" class="a" />
<line x1="-401.78" y1="115.99" x2="-414.40" y2="131.52" class="a" stroke-dasharray="3.87 3.87"/>
<line x1="4.49" y1="756.23" x2="-22.58" y2="748.99" class="a" stroke-dasharray="3.11 3.11"/>
<line x1="1205.29" y1="545.83" x2="1192.67" y2="561.36" class="a" />
<line x1="753.88" y1="-165.55" x2="726.81" y2="-172.79" class="a" />
<line x1="359.47" y1="-444.89" x2="332.39" y2="-452.13" class="a" />
<line x1="1215.22" y1="543.76" x2="1227.84" y2="528.23" class="a" />
<line x1="1221.98" y1="545.57" x2="1234.60" y2="530.04" class="a" />
<line x1="1234.60" y1="530.04" x2="1248.14" y2="533.66" class="a" />
<line x1="1248.14" y1="533.66" x2="1235.52" y2="549.19" class="a" />
<line x1="1235.52" y1="549.19" x2="1221.98" y2="545.57" class="a" />
<line x1="1242.28" y1="551.00" x2="1254.90" y2="535.47" class="a" />
<line x1="1254.90" y1="535.47" x2="1268.44" y2="539.09" class="a" />
<line x1="1268.44" y1="539.09" x2="1255.82" y2="554.61" class="a" />
<line x1="1255.82" y1="554.61" x2="1242.28" y2="551.00" class="a" />
<line x1="776.43" y1="-183.14" x2="803.49" y2="-175.90" class="a" />
<line x1="773.27" y1="-179.26" x2="800.34" y2="-172.02" class="a" />
<line x1="800.34" y1="-172.02" x2="794.03" y2="-164.26" class="a" />
<line x1="794.03" y1="-164.26" x2="766.96" y2="-171.50" class="a" />
<line x1="766.96" y1="-171.50" x2="773.27" y2="-179.26" class="a" />
<line x1="763.80" y1="-167.62" x2="790.87" y2="-160.38" class="a" />
<line x1="790.87" y1="-160.38" x2="784.56" y2="-152.62" class="a" />
<line x1="784.56" y1="-152.62" x2="757.49" y2="-159.86" class="a" />
<line x1="757.49" y1="-159.86" x2="763.80" y2="-167.62" class="a" />
<line x1="366.23" y1="-473.66" x2="393.30" y2="-466.42" class="a" />
<line x1="366.23" y1="-467.54" x2="393.30" y2="-460.30" class="a" />
<line x1="393.30" y1="-460.30" x2="393.30" y2="-448.07" class="a" />
<line x1="393.30" y1="-448.07" x2="366.23" y2="-455.31" class="a" />
<line x1="366.23" y1="-455.31" x2="366.23" y2="-467.54" class="a" />
<line x1="366.23" y1="-449.19" x2="393.30" y2="-441.95" class="a" />
<line x1="393.30" y1="-441.95" x2="393.30" y2="-429.72" class="a" />
<line x1="393.30" y1="-429.72" x2="366.23" y2="-436.96" class="a" />
<line x1="366.23" y1="-436.96" x2="366.23" y2="-449.19" class="a" />
<line x1="-486.36" y1="93.37" x2="-498.99" y2="108.90" class="a" stroke-dasharray="3.87 3.87"/>
<line x1="-34.95" y1="804.75" x2="-62.02" y2="797.51" class="a" stroke-dasharray="3.11 3.11"/>
<line x1="-542.98" y1="61.69" x2="-529.45" y2="65.31" class="a" />
<line x1="-517.04" y1="80.44" x2="-504.42" y2="64.92" class="a" />
<line x1="-510.27" y1="82.25" x2="-497.65" y2="66.73" class="a" />
<line x1="-497.65" y1="66.73" x2="-484.12" y2="70.35" class="a" />
<line x1="-484.12" y1="70.35" x2="-496.74" y2="85.87" class="a" />
<line x1="-496.74" y1="85.87" x2="-510.27" y2="82.25" class="a" />
<line x1="-489.97" y1="87.68" x2="-477.35" y2="72.16" class="a" />
<line x1="-477.35" y1="72.16" x2="-463.82" y2="75.78" class="a" />
<line x1="-463.82" y1="75.78" x2="-476.44" y2="91.30" class="a" />
<line x1="-476.44" y1="91.30" x2="-489.97" y2="87.68" class="a" />
<line x1="-8.11" y1="807.20" x2="-14.42" y2="814.96" class="a" />
<line x1="-40.80" y1="822.08" x2="-13.74" y2="829.32" class="a" />
<line x1="-43.96" y1="825.96" x2="-16.89" y2="833.20" class="a" />
<line x1="-16.89" y1="833.20" x2="-23.20" y2="840.96" class="a" />
<line x1="-23.20" y1="840.96" x2="-50.27" y2="833.72" class="a" />
<line x1="-50.27" y1="833.72" x2="-43.96" y2="825.96" class="a" />
<line x1="-53.43" y1="837.61" x2="-26.36" y2="844.84" class="a" />
<line x1="-26.36" y1="844.84" x2="-32.67" y2="852.61" class="a" />
<line x1="-32.67" y1="852.61" x2="-59.74" y2="845.37" class="a" />
<line x1="-59.74" y1="845.37" x2="-53.43" y2="837.61" class="a" />
<line x1="1289.88" y1="568.45" x2="1277.25" y2="583.98" class="a" />
<line x1="793.32" y1="-214.06" x2="766.25" y2="-221.30" class="a" />
<line x1="359.47" y1="-521.34" x2="332.39" y2="-528.58" class="a" />
<line x1="-570.94" y1="70.75" x2="-583.57" y2="86.28" class="a" stroke-dasharray="3.87 3.87"/>
<line x1="-74.39" y1="853.26" x2="-101.46" y2="846.02" class="a" stroke-dasharray="3.11 3.11"/>
<line x1="1374.46" y1="591.07" x2="1361.84" y2="606.60" class="a" />
<line x1="832.77" y1="-262.58" x2="805.69" y2="-269.82" class="a" />
<line x1="359.47" y1="-597.79" x2="332.39" y2="-605.03" class="a" />
<line x1="1384.38" y1="589.00" x2="1397.00" y2="573.48" class="a" />
<line x1="1403.77" y1="575.29" x2="1417.30" y2="578.91" class="a" />
<line x1="1417.30" y1="578.91" x2="1412.57" y2="584.73" class="a" />
<line x1="1412.57" y1="584.73" x2="1399.04" y2="581.11" class="a" />
<line x1="1399.04" y1="581.11" x2="1391.15" y2="590.81" class="a" />
<line x1="1391.15" y1="590.81" x2="1404.68" y2="594.43" class="a" />
<line x1="1411.45" y1="596.24" x2="1424.07" y2="580.72" class="a" />
<line x1="1424.07" y1="580.72" x2="1437.60" y2="584.34" class="a" />
<line x1="1437.60" y1="584.34" x2="1424.98" y2="599.86" class="a" />
<line x1="1424.98" y1="599.86" x2="1411.45" y2="596.24" class="a" />
<line x1="855.31" y1="-280.17" x2="882.37" y2="-272.93" class="a" />
<line x1="879.22" y1="-269.05" x2="872.91" y2="-261.29" class="a" />
<line x1="872.91" y1="-261.29" x2="862.76" y2="-264.00" class="a" />
<line x1="862.76" y1="-264.00" x2="869.07" y2="-271.77" class="a" />
<line x1="869.07" y1="-271.77" x2="852.15" y2="-276.29" class="a" />
<line x1="852.15" y1="-276.29" x2="845.84" y2="-268.53" class="a" />
<line x1="842.69" y1="-264.65" x2="869.75" y2="-257.41" class="a" />
<line x1="869.75" y1="-257.41" x2="863.44" y2="-249.65" class="a" />
<line x1="863.44" y1="-249.65" x2="836.38" y2="-256.89" class="a" />
<line x1="836.38" y1="-256.89" x2="842.69" y2="-264.65" class="a" />
<line x1="366.23" y1="-626.56" x2="393.30" y2="-619.32" class="a" />
<line x1="393.30" y1="-613.20" x2="393.30" y2="-600.97" class="a" />
<line x1="393.30" y1="-600.97" x2="383.15" y2="-603.68" class="a" />
<line x1="383.15" y1="-603.68" x2="383.15" y2="-615.91" class="a" />
<line x1="383.15" y1="-615.91" x2="366.23" y2="-620.44" class="a" />
<line x1="366.23" y1="-620.44" x2="366.23" y2="-608.21" class="a" />
<line x1="366.23" y1="-602.09" x2="393.30" y2="-594.85" class="a" />
<line x1="393.30" y1="-594.85" x2="393.30" y2="-582.62" class="a" />
<line x1="393.30" y1="-582.62" x2="366.23" y2="-589.86" class="a" />
<line x1="366.23" y1="-589.86" x2="366.23" y2="-602.09" class="a" />
<line x1="-655.53" y1="48.13" x2="-668.15" y2="63.65" class="a" stroke-dasharray="3.87 3.87"/>
<line x1="-113.83" y1="901.78" x2="-140.91" y2="894.53" class="a" stroke-dasharray="3.11 3.11"/>
<line x1="-712.15" y1="16.44" x2="-698.62" y2="20.06" class="a" />
<line x1="-686.20" y1="35.20" x2="-673.58" y2="19.67" class="a" />
<line x1="-666.82" y1="21.48" x2="-653.28" y2="25.10" class="a" />
<line x1="-653.28" y1="25.10" x2="-658.02" y2="30.92" class="a" />
<line x1="-658.02" y1="30.92" x2="-671.55" y2="27.30" class="a" />
<line x1="-671.55" y1="27.30" x2="-679.44" y2="37.01" class="a" />
<line x1="-679.44" y1="37.01" x2="-665.90" y2="40.63" class="a" />
<line x1="-659.14" y1="42.44" x2="-646.52" y2="26.91" class="a" />
<line x1="-646.52" y1="26.91" x2="-632.98" y2="30.53" class="a" />
<line x1="-632.98" y1="30.53" x2="-645.60" y2="46.06" class="a" />
<line x1="-645.60" y1="46.06" x2="-659.14" y2="42.44" class="a" />
<line x1="-86.99" y1="904.23" x2="-93.31" y2="911.99" class="a" />
<line x1="-119.69" y1="919.11" x2="-92.62" y2="926.35" class="a" />
<line x1="-95.78" y1="930.23" x2="-102.09" y2="937.99" class="a" />
<line x1="-102.09" y1="937.99" x2="-112.24" y2="935.28" class="a" />
<line x1="-112.24" y1="935.28" x2="-105.93" y2="927.52" class="a" />
<line x1="-105.93" y1="927.52" x2="-122.84" y2="922.99" class="a" />
<line x1="-122.84" y1="922.99" x2="-129.15" y2="930.75" class="a" />
<line x1="-132.31" y1="934.63" x2="-105.24" y2="941.87" class="a" />
<line x1="-105.24" y1="941.87" x2="-111.55" y2="949.64" class="a" />
<line x1="-111.55" y1="949.64" x2="-138.62" y2="942.40" class="a" />
<line x1="-138.62" y1="942.40" x2="-132.31" y2="934.63" class="a" />
<line x1="1459.04" y1="613.70" x2="1446.42" y2="629.22" class="a" />
<line x1="872.21" y1="-311.09" x2="845.13" y2="-318.33" class="a" />
<line x1="359.47" y1="-674.23" x2="332.39" y2="-681.48" class="a" />
<line x1="-740.11" y1="25.50" x2="-752.73" y2="41.03" class="a" stroke-dasharray="3.87 3.87"/>
<line x1="-153.27" y1="950.29" x2="-180.35" y2="943.05" class="a" stroke-dasharray="3.11 3.11"/>
<line x1="1543.62" y1="636.32" x2="1531.00" y2="651.85" class="a" />
<line x1="911.65" y1="-359.61" x2="884.58" y2="-366.85" class="a" />
<line x1="359.47" y1="-750.68" x2="332.39" y2="-757.92" class="a" />
<line x1="1553.55" y1="634.25" x2="1566.17" y2="618.72" class="a" />
<line x1="1572.93" y1="620.53" x2="1568.20" y2="626.35" class="a" />
<line x1="1568.20" y1="626.35" x2="1581.73" y2="629.97" class="a" />
<line x1="1586.47" y1="624.15" x2="1573.85" y2="639.68" class="a" />
<line x1="1580.61" y1="641.49" x2="1593.23" y2="625.96" class="a" />
<line x1="1593.23" y1="625.96" x2="1606.77" y2="629.58" class="a" />
<line x1="1606.77" y1="629.58" x2="1594.15" y2="645.11" class="a" />
<line x1="1594.15" y1="645.11" x2="1580.61" y2="641.49" class="a" />
<line x1="934.19" y1="-377.20" x2="961.26" y2="-369.96" class="a" />
<line x1="958.10" y1="-366.08" x2="947.95" y2="-368.80" class="a" />
<line x1="947.95" y1="-368.80" x2="941.64" y2="-361.03" class="a" />
<line x1="951.79" y1="-358.32" x2="924.73" y2="-365.56" class="a" />
<line x1="921.57" y1="-361.68" x2="948.64" y2="-354.44" class="a" />
<line x1="948.64" y1="-354.44" x2="942.33" y2="-346.68" class="a" />
<line x1="942.33" y1="-346.68" x2="915.26" y2="-353.91" class="a" />
<line x1="915.26" y1="-353.91" x2="921.57" y2="-361.68" class="a" />
<line x1="366.23" y1="-779.45" x2="393.30" y2="-772.21" class="a" />
<line x1="393.30" y1="-766.10" x2="383.15" y2="-768.81" class="a" />
<line x1="383.15" y1="-768.81" x2="383.15" y2="-756.58" class="a" />
<line x1="393.30" y1="-753.87" x2="366.23" y2="-761.11" class="a" />
<line x1="366.23" y1="-754.99" x2="393.30" y2="-747.75" class="a" />
<line x1="393.30" y1="-747.75" x2="393.30" y2="-735.52" class="a" />
<line x1="393.30" y1="-735.52" x2="366.23" y2="-742.76" class="a" />
<line x1="366.23" y1="-742.76" x2="366.23" y2="-754.99" class="a" />
<line x1="-824.69" y1="2.88" x2="-837.32" y2="18.41" class="a" stroke-dasharray="3.87 3.87"/>
<line x1="-192.72" y1="998.80" x2="-219.79" y2="991.56" class="a" stroke-dasharray="3.11 3.11"/>
<line x1="-881.31" y1="-28.80" x2="-867.78" y2="-25.18" class="a" />
<line x1="-855.37" y1="-10.05" x2="-842.75" y2="-25.57" class="a" />
<line x1="-835.98" y1="-23.76" x2="-840.72" y2="-17.94" class="a" />
<line x1="-840.72" y1="-17.94" x2="-827.18" y2="-14.32" class="a" />
<line x1="-822.45" y1="-20.14" x2="-835.07" y2="-4.62" class="a" />
<line x1="-828.30" y1="-2.81" x2="-815.68" y2="-18.33" class="a" />
<line x1="-815.68" y1="-18.33" x2="-802.15" y2="-14.72" class="a" />
<line x1="-802.15" y1="-14.72" x2="-814.77" y2="0.81" class="a" />
<line x1="-814.77" y1="0.81" x2="-828.30" y2="-2.81" class="a" />
<line x1="-165.88" y1="1001.26" x2="-172.19" y2="1009.02" class="a" />
<line x1="-198.57" y1="1016.14" x2="-171.50" y2="1023.38" class="a" />
<line x1="-174.66" y1="1027.26" x2="-184.81" y2="1024.55" class="a" />
<line x1="-184.81" y1="1024.55" x2="-191.12" y2="1032.31" class="a" />
<line x1="-180.97" y1="1035.02" x2="-208.04" y2="1027.78" class="a" />
<line x1="-211.19" y1="1031.66" x2="-184.13" y2="1038.90" class="a" />
<line x1="-184.13" y1="1038.90" x2="-190.44" y2="1046.67" class="a" />
<line x1="-190.44" y1="1046.67" x2="-217.50" y2="1039.43" class="a" />
<line x1="-217.50" y1="1039.43" x2="-211.19" y2="1031.66" class="a" />
<line x1="1628.21" y1="658.94" x2="1615.58" y2="674.47" class="a" />
<line x1="951.09" y1="-408.12" x2="924.02" y2="-415.36" class="a" />
<line x1="359.47" y1="-827.13" x2="332.39" y2="-834.37" class="a" />
<line x1="-909.28" y1="-19.74" x2="-921.90" y2="-4.21" class="a" stroke-dasharray="3.87 3.87"/>
<line x1="-232.16" y1="1047.32" x2="-259.23" y2="1040.08" class="a" stroke-dasharray="3.11 3.11"/>
<line x1="1712.79" y1="681.56" x2="1700.17" y2="697.09" class="a" />
<line x1="990.53" y1="-456.64" x2="963.46" y2="-463.88" class="a" />
<line x1="359.47" y1="-903.58" x2="332.39" y2="-910.82" class="a" />
<line x1="1722.71" y1="679.49" x2="1735.33" y2="663.97" class="a" />
<line x1="1755.63" y1="669.40" x2="1742.10" y2="665.78" class="a" />
<line x1="1742.10" y1="665.78" x2="1729.48" y2="681.30" class="a" />
<line x1="1729.48" y1="681.30" x2="1743.01" y2="684.92" class="a" />
<line x1="1743.01" y1="684.92" x2="1750.90" y2="675.22" class="a" />
<line x1="1750.90" y1="675.22" x2="1737.37" y2="671.60" class="a" />
<line x1="1749.78" y1="686.73" x2="1762.40" y2="671.21" class="a" />
<line x1="1762.40" y1="671.21" x2="1775.93" y2="674.83" class="a" />
<line x1="1775.93" y1="674.83" x2="1763.31" y2="690.35" class="a" />
<line x1="1763.31" y1="690.35" x2="1749.78" y2="686.73" class="a" />
<line x1="1013.07" y1="-474.23" x2="1040.14" y2="-466.99" class="a" />
<line x1="1030.68" y1="-455.35" x2="1036.99" y2="-463.11" class="a" />
<line x1="1036.99" y1="-463.11" x2="1009.92" y2="-470.35" class="a" />
<line x1="1009.92" y1="-470.35" x2="1003.61" y2="-462.59" class="a" />
<line x1="1003.61" y1="-462.59" x2="1020.53" y2="-458.06" class="a" />
<line x1="1020.53" y1="-458.06" x2="1026.84" y2="-465.83" class="a" />
<line x1="1000.45" y1="-458.71" x2="1027.52" y2="-451.47" class="a" />
<line x1="1027.52" y1="-451.47" x2="1021.21" y2="-443.70" class="a" />
<line x1="1021.21" y1="-443.70" x2="994.14" y2="-450.94" class="a" />
<line x1="994.14" y1="-450.94" x2="1000.45" y2="-458.71" class="a" />
<line x1="366.23" y1="-932.35" x2="393.30" y2="-925.11" class="a" />
<line x1="393.30" y1="-906.76" x2="393.30" y2="-919.00" class="a" />
<line x1="393.30" y1="-919.00" x2="366.23" y2="-926.23" class="a" />
<line x1="366.23" y1="-926.23" x2="366.23" y2="-914.00" class="a" />
<line x1="366.23" y1="-914.00" x2="383.15" y2="-909.48" class="a" />
<line x1="383.15" y1="-909.48" x2="383.15" y2="-921.71" class="a" />
<line x1="366.23" y1="-907.89" x2="393.30" y2="-900.65" class="a" />
<line x1="393.30" y1="-900.65" x2="393.30" y2="-888.42" class="a" />
<line x1="393.30" y1="-888.42" x2="366.23" y2="-895.66" class="a" />
<line x1="366.23" y1="-895.66" x2="366.23" y2="-907.89" class="a" />
<line x1="-993.86" y1="-42.36" x2="-1006.48" y2="-26.84" class="a" stroke-dasharray="3.87 3.87"/>
<line x1="-271.60" y1="1095.83" x2="-298.67" y2="1088.59" class="a" stroke-dasharray="3.11 3.11"/>
<line x1="-1050.48" y1="-74.05" x2="-1036.95" y2="-70.43" class="a" />
<line x1="-1024.54" y1="-55.29" x2="-1011.91" y2="-70.82" class="a" />
<line x1="-991.61" y1="-65.39" x2="-1005.15" y2="-69.01" class="a" />
<line x1="-1005.15" y1="-69.01" x2="-1017.77" y2="-53.49" class="a" />
<line x1="-1017.77" y1="-53.49" x2="-1004.24" y2="-49.87" class="a" />
<line x1="-1004.24" y1="-49.87" x2="-996.35" y2="-59.57" class="a" />
<line x1="-996.35" y1="-59.57" x2="-1009.88" y2="-63.19" class="a" />
<line x1="-997.47" y1="-48.06" x2="-984.85" y2="-63.58" class="a" />
<line x1="-984.85" y1="-63.58" x2="-971.31" y2="-59.96" class="a" />
<line x1="-971.31" y1="-59.96" x2="-983.94" y2="-44.44" class="a" />
<line x1="-983.94" y1="-44.44" x2="-997.47" y2="-48.06" class="a" />
<line x1="-244.76" y1="1098.29" x2="-251.07" y2="1106.05" class="a" />
<line x1="-277.45" y1="1113.17" x2="-250.39" y2="1120.41" class="a" />
<line x1="-259.85" y1="1132.05" x2="-253.54" y2="1124.29" class="a" />
<line x1="-253.54" y1="1124.29" x2="-280.61" y2="1117.05" class="a" />
<line x1="-280.61" y1="1117.05" x2="-286.92" y2="1124.81" class="a" />
<line x1="-286.92" y1="1124.81" x2="-270.00" y2="1129.34" class="a" />
<line x1="-270.00" y1="1129.34" x2="-263.69" y2="1121.57" class="a" />
<line x1="-290.08" y1="1128.69" x2="-263.01" y2="1135.93" class="a" />
<line x1="-263.01" y1="1135.93" x2="-269.32" y2="1143.70" class="a" />
<line x1="-269.32" y1="1143.70" x2="-296.39" y2="1136.46" class="a" />
<line x1="-296.39" y1="1136.46" x2="-290.08" y2="1128.69" class="a" />
<line x1="1797.37" y1="704.19" x2="1784.75" y2="719.71" class="a" />
<line x1="1029.97" y1="-505.15" x2="1002.90" y2="-512.39" class="a" />
<line x1="359.47" y1="-980.03" x2="332.39" y2="-987.27" class="a" />
<line x1="-1078.44" y1="-64.99" x2="-1091.06" y2="-49.46" class="a" stroke-dasharray="3.87 3.87"/>
<line x1="-311.04" y1="1144.35" x2="-338.11" y2="1137.11" class="a" stroke-dasharray="3.11 3.11"/>
<line x1="1881.96" y1="726.81" x2="1869.33" y2="742.34" class="a" />
<line x1="1069.41" y1="-553.66" x2="1042.34" y2="-560.91" class="a" />
<line x1="359.47" y1="-1056.48" x2="332.39" y2="-1063.72" class="a" />
<line x1="1891.88" y1="724.74" x2="1904.50" y2="709.21" class="a" />
<line x1="1898.64" y1="726.55" x2="1911.27" y2="711.02" class="a" />
<line x1="1911.27" y1="711.02" x2="1924.80" y2="714.64" class="a" />
<line x1="1924.80" y1="714.64" x2="1912.18" y2="730.17" class="a" />
<line x1="1912.18" y1="730.17" x2="1898.64" y2="726.55" class="a" />
<line x1="1906.53" y1="716.84" x2="1920.07" y2="720.46" class="a" />
<line x1="1918.94" y1="731.98" x2="1931.57" y2="716.45" class="a" />
<line x1="1931.57" y1="716.45" x2="1945.10" y2="720.07" class="a" />
<line x1="1945.10" y1="720.07" x2="1932.48" y2="735.60" class="a" />
<line x1="1932.48" y1="735.60" x2="1918.94" y2="731.98" class="a" />
<line x1="1091.96" y1="-571.26" x2="1119.02" y2="-564.02" class="a" />
<line x1="1088.80" y1="-567.38" x2="1115.87" y2="-560.14" class="a" />
<line x1="1115.87" y1="-560.14" x2="1109.56" y2="-552.38" class="a" />
<line x1="1109.56" y1="-552.38" x2="1082.49" y2="-559.62" class="a" />
<line x1="1082.49" y1="-559.62" x2="1088.80" y2="-567.38" class="a" />
<line x1="1105.72" y1="-562.85" x2="1099.41" y2="-555.09" class="a" />
<line x1="1079.34" y1="-555.74" x2="1106.40" y2="-548.50" class="a" />
<line x1="1106.40" y1="-548.50" x2="1100.09" y2="-540.73" class="a" />
<line x1="1100.09" y1="-540.73" x2="1073.03" y2="-547.97" class="a" />
<line x1="1073.03" y1="-547.97" x2="1079.34" y2="-555.74" class="a" />
<line x1="366.23" y1="-1085.25" x2="393.30" y2="-1078.01" class="a" />
<line x1="366.23" y1="-1079.13" x2="393.30" y2="-1071.89" class="a" />
<line x1="393.30" y1="-1071.89" x2="393.30" y2="-1059.66" class="a" />
<line x1="393.30" y1="-1059.66" x2="366.23" y2="-1066.90" class="a" />
<line x1="366.23" y1="-1066.90" x2="366.23" y2="-1079.13" class="a" />
<line x1="383.15" y1="-1074.61" x2="383.15" y2="-1062.38" class="a" />
<line x1="366.23" y1="-1060.78" x2="393.30" y2="-1053.55" class="a" />
<line x1="393.30" y1="-1053.55" x2="393.30" y2="-1041.31" class="a" />
<line x1="393.30" y1="-1041.31" x2="366.23" y2="-1048.55" class="a" />
<line x1="366.23" y1="-1048.55" x2="366.23" y2="-1060.78" class="a" />
<line x1="-1163.02" y1="-87.61" x2="-1175.65" y2="-72.08" class="a" stroke-dasharray="3.87 3.87"/>
<line x1="-350.48" y1="1192.86" x2="-377.55" y2="1185.62" class="a" stroke-dasharray="3.11 3.11"/>
<line x1="-1219.65" y1="-119.29" x2="-1206.11" y2="-115.67" class="a" />
<line x1="-1193.70" y1="-100.54" x2="-1181.08" y2="-116.07" class="a" />
<line x1="-1186.93" y1="-98.73" x2="-1174.31" y2="-114.26" class="a" />
<line x1="-1174.31" y1="-114.26" x2="-1160.78" y2="-110.64" class="a" />
<line x1="-1160.78" y1="-110.64" x2="-1173.40" y2="-95.11" class="a" />
<line x1="-1173.40" y1="-95.11" x2="-1186.93" y2="-98.73" class="a" />
<line x1="-1179.05" y1="-108.43" x2="-1165.51" y2="-104.81" class="a" />
<line x1="-1166.63" y1="-93.30" x2="-1154.01" y2="-108.83" class="a" />
<line x1="-1154.01" y1="-108.83" x2="-1140.48" y2="-105.21" class="a" />
<line x1="-1140.48" y1="-105.21" x2="-1153.10" y2="-89.68" class="a" />
<line x1="-1153.10" y1="-89.68" x2="-1166.63" y2="-93.30" class="a" />
<line x1="-323.64" y1="1195.32" x2="-329.95" y2="1203.08" class="a" />
<line x1="-356.34" y1="1210.20" x2="-329.27" y2="1217.44" class="a" />
<line x1="-359.49" y1="1214.08" x2="-332.43" y2="1221.32" class="a" />
<line x1="-332.43" y1="1221.32" x2="-338.74" y2="1229.08" class="a" />
<line x1="-338.74" y1="1229.08" x2="-365.80" y2="1221.84" class="a" />
<line x1="-365.80" y1="1221.84" x2="-359.49" y2="1214.08" class="a" />
<line x1="-342.58" y1="1218.60" x2="-348.89" y2="1226.37" class="a" />
<line x1="-368.96" y1="1225.72" x2="-341.89" y2="1232.96" class="a" />
<line x1="-341.89" y1="1232.96" x2="-348.20" y2="1240.72" class="a" />
<line x1="-348.20" y1="1240.72" x2="-375.27" y2="1233.49" class="a" />
<line x1="-375.27" y1="1233.49" x2="-368.96" y2="1225.72" class="a" />
<ellipse cx="410.58" cy="332.82" rx="7.0" ry="5.0" fill="url(#dg)"/>
<ellipse cx="400.72" cy="344.95" rx="7.0" ry="5.0" fill="url(#dg)"/>
<ellipse cx="360.41" cy="348.93" rx="7.0" ry="5.0" fill="url(#dg)"/>
<ellipse cx="421.87" cy="350.60" rx="7.0" ry="5.0" fill="url(#dg)"/>
<ellipse cx="483.32" cy="352.28" rx="7.0" ry="5.0" fill="url(#dg)"/>
<ellipse cx="513.77" cy="360.42" rx="7.0" ry="5.0" fill="url(#dg)"/>
<ellipse cx="473.46" cy="364.40" rx="7.0" ry="5.0" fill="url(#dg)"/>
<ellipse cx="534.92" cy="366.08" rx="7.0" ry="5.0" fill="url(#dg)"/>
<ellipse cx="442.46" cy="370.88" rx="7.0" ry="5.0" fill="url(#dg)"/>
<ellipse cx="565.37" cy="374.22" rx="7.0" ry="5.0" fill="url(#dg)"/>
<ellipse cx="463.60" cy="376.53" rx="7.0" ry="5.0" fill="url(#dg)"/>
<ellipse cx="555.51" cy="386.35" rx="7.0" ry="5.0" fill="url(#dg)"/>
<ellipse cx="392.29" cy="386.99" rx="7.0" ry="5.0" fill="url(#dg)"/>
<ellipse cx="616.96" cy="388.02" rx="7.0" ry="5.0" fill="url(#dg)"/>
<ellipse cx="361.28" cy="393.46" rx="7.0" ry="5.0" fill="url(#dg)"/>
<ellipse cx="320.97" cy="397.45" rx="7.0" ry="5.0" fill="url(#dg)"/>
<ellipse cx="545.65" cy="398.48" rx="7.0" ry="5.0" fill="url(#dg)"/>
<ellipse cx="382.43" cy="399.12" rx="7.0" ry="5.0" fill="url(#dg)"/>
<ellipse cx="607.10" cy="400.15" rx="7.0" ry="5.0" fill="url(#dg)"/>
<ellipse cx="443.88" cy="400.79" rx="7.0" ry="5.0" fill="url(#dg)"/>
<ellipse cx="668.56" cy="401.82" rx="7.0" ry="5.0" fill="url(#dg)"/>
<ellipse cx="372.57" cy="411.25" rx="7.0" ry="5.0" fill="url(#dg)"/>
<ellipse cx="597.24" cy="412.28" rx="7.0" ry="5.0" fill="url(#dg)"/>
<ellipse cx="434.02" cy="412.92" rx="7.0" ry="5.0" fill="url(#dg)"/>
<ellipse cx="495.48" cy="414.59" rx="7.0" ry="5.0" fill="url(#dg)"/>
<ellipse cx="403.02" cy="419.39" rx="7.0" ry="5.0" fill="url(#dg)"/>
<ellipse cx="679.85" cy="419.60" rx="7.0" ry="5.0" fill="url(#dg)"/>
<ellipse cx="464.47" cy="421.06" rx="7.0" ry="5.0" fill="url(#dg)"/>
<ellipse cx="525.93" cy="422.73" rx="7.0" ry="5.0" fill="url(#dg)"/>
<ellipse cx="424.16" cy="425.05" rx="7.0" ry="5.0" fill="url(#dg)"/>
<ellipse cx="648.84" cy="426.08" rx="7.0" ry="5.0" fill="url(#dg)"/>
<ellipse cx="485.62" cy="426.72" rx="7.0" ry="5.0" fill="url(#dg)"/>
<ellipse cx="516.07" cy="434.86" rx="7.0" ry="5.0" fill="url(#dg)"/>
<ellipse cx="577.52" cy="436.53" rx="7.0" ry="5.0" fill="url(#dg)"/>
<ellipse cx="537.21" cy="440.52" rx="7.0" ry="5.0" fill="url(#dg)"/>
<ellipse cx="506.21" cy="446.99" rx="7.0" ry="5.0" fill="url(#dg)"/>
<ellipse cx="567.66" cy="448.66" rx="7.0" ry="5.0" fill="url(#dg)"/>
<ellipse cx="629.12" cy="450.33" rx="7.0" ry="5.0" fill="url(#dg)"/>
<ellipse cx="650.26" cy="455.99" rx="7.0" ry="5.0" fill="url(#dg)"/>
<ellipse cx="557.80" cy="460.79" rx="7.0" ry="5.0" fill="url(#dg)"/>
<ellipse cx="640.40" cy="468.12" rx="7.0" ry="5.0" fill="url(#dg)"/>
<ellipse cx="670.85" cy="476.26" rx="7.0" ry="5.0" fill="url(#dg)"/>
<ellipse cx="692.00" cy="481.92" rx="7.0" ry="5.0" fill="url(#dg)"/>
<ellipse cx="660.99" cy="488.39" rx="7.0" ry="5.0" fill="url(#dg)"/>
<line x1="99.70" y1="641.70" x2="135.59" y2="651.30" stroke="#d81e2a" stroke-width="1.5"/>
<line x1="99.70" y1="641.70" x2="116.44" y2="621.11" stroke="#3cd03c" stroke-width="1.5"/>
<line x1="99.70" y1="641.70" x2="99.70" y2="609.26" stroke="#2a2ac8" stroke-width="1.5"/>
<line x1="139.77" y1="656.22" x2="145.77" y2="650.22" class="a"/>
<line x1="139.77" y1="650.22" x2="145.77" y2="656.22" class="a"/>
<line x1="116.78" y1="620.00" x2="122.78" y2="614.00" class="a"/>
<line x1="116.78" y1="614.00" x2="119.78" y2="617.00" class="a"/>
<line x1="96.70" y1="605.77" x2="102.70" y2="605.77" class="a"/>
<line x1="96.70" y1="599.77" x2="102.70" y2="599.77" class="a"/>
<line x1="96.70" y1="605.77" x2="102.70" y2="599.77" class="a"/>
</svg>
<div class="abs" style="left:0;top:0;width:997px;height:713px;border:1px solid #141516;"></div>
</div>
<div class="abs" style="left:1015px;top:27px;width:1px;height:714px;background:#fbfbfb;"></div>
<div class="abs" style="left:17px;top:740px;width:999px;height:1px;background:#fbfbfb;"></div>
<div class="abs" style="left:17px;top:27px;width:1px;height:713px;background:#f8f8f8;"></div>

<!-- toolbar -->
<svg width="1469" height="968" style="left:0;top:0;position:absolute">
<g stroke-linecap="butt" stroke-linejoin="miter" fill="none" stroke="#111">
<!-- separators -->
<g stroke="#c9c9c9" stroke-width="1">
<line x1="91.5" y1="744" x2="91.5" y2="768"/><line x1="230.5" y1="744" x2="230.5" y2="768"/><line x1="435.5" y1="744" x2="435.5" y2="768"/><line x1="508.5" y1="744" x2="508.5" y2="768"/>
</g>
<!-- 1 preview: dashed cube + chevrons -->
<g stroke="#222" stroke-width="1.3" stroke-dasharray="1.3 1.7">
<polygon points="37.5,747.7 46.2,752.8 46.2,762.6 37.5,767.5 29.0,762.6 29.0,752.8"/>
<polyline points="29.4,753 37.5,757.4 45.8,753"/><line x1="37.5" y1="757.4" x2="37.5" y2="761"/>
</g>
<g stroke="#000" stroke-width="2.6" stroke-linejoin="miter">
<polyline points="32.3,761.6 37.6,765.9 32.3,770.2"/><polyline points="37.8,761.6 43.1,765.9 37.8,770.2"/>
</g>
<!-- 2 render: cube + hourglass -->
<g stroke="#111" stroke-width="1.5">
<polygon points="70.7,747.8 79.3,752.7 79.3,762.8 70.7,767.6 62.2,762.8 62.2,752.7"/>
<polyline points="62.4,752.8 70.7,757.6 79.1,752.8"/><line x1="70.7" y1="757.6" x2="70.7" y2="762"/>
</g>
<rect x="66.5" y="761.6" width="8.4" height="7.5" fill="#efefef" stroke="none"/>
<g fill="#111" stroke="none">
<rect x="68" y="761.8" width="5.4" height="1.6"/><polygon points="68.8,764 72.6,764 70.7,766.2"/>
<polygon points="70.7,766.6 68.6,769 72.8,769" fill="#777"/><rect x="67.8" y="769" width="5.8" height="2"/>
</g>
<!-- 3 view all -->
<g stroke="#111" stroke-width="2">
<polyline points="103.3,753.4 103.3,750.2 106.8,750.2"/><polyline points="112.3,750.2 115.8,750.2 115.8,753.4"/>
<polyline points="103.3,759 103.3,762.2 106.8,762.2"/>
<circle cx="109.3" cy="756.3" r="4.2" stroke-width="2.1"/>
<line x1="112.2" y1="759.4" x2="116.6" y2="764.8" stroke-width="2.8"/>
</g>
<!-- 4 zoom in -->
<g stroke="#111">
<circle cx="142.2" cy="756" r="4.6" stroke-width="2"/>
<line x1="145.4" y1="759.4" x2="149.9" y2="765.4" stroke-width="2.6"/>
<line x1="139.6" y1="756" x2="144.8" y2="756" stroke-width="1.2"/><line x1="142.2" y1="753.4" x2="142.2" y2="758.6" stroke-width="1.2"/>
</g>
<!-- 5 zoom out -->
<g stroke="#111">
<circle cx="175.2" cy="756" r="4.6" stroke-width="2"/>
<line x1="178.4" y1="759.4" x2="182.9" y2="765.4" stroke-width="2.6"/>
<line x1="172.6" y1="756" x2="177.8" y2="756" stroke-width="1.4"/>
</g>
<!-- 6 reset view -->
<g stroke="#111" stroke-width="2.2">
<path d="M203,754.6 A8,8 0 1 1 202.3,761.6"/>
</g>
<polygon points="201.4,750.4 201.4,757.2 207,755.8" fill="#111" stroke="none"/>
<!-- 7 view right -->
<g stroke="#111" stroke-width="1.4">
<polygon points="241.5,757.2 244.3,750.4 252.4,750.7 253.9,757.2 251.9,763.9 243.6,763.6"/>
<line x1="241.6" y1="757" x2="250.3" y2="757"/><polyline points="252.4,750.8 250.3,757 251.9,763.8"/>
</g>
<polygon points="253.6,755.2 253.6,759.4 257.9,757.6" fill="#000" stroke="none"/>
<!-- 8 view top -->
<g stroke="#111" stroke-width="1.4">
<polygon points="282.7,753.1 289.4,755.4 289.4,762.8 282.7,765.5 276.3,762.8 276.3,755.4"/>
<polyline points="276.5,755.5 282.7,757.5 289.2,755.5"/><line x1="282.7" y1="757.5" x2="282.7" y2="765.3"/>
</g>
<polygon points="280.7,753.4 284.7,753.4 282.7,748.6" fill="#000" stroke="none"/>
<!-- 9 view bottom -->
<g stroke="#111" stroke-width="1.4">
<polygon points="313.9,749.6 321.2,752.3 321.2,759.8 314.2,762.3 307.5,760.1 307.5,752.3"/>
<line x1="313.9" y1="749.8" x2="313.9" y2="758.2"/><polyline points="307.7,760 313.9,758.2 321,759.7"/>
</g>
<polygon points="312.2,762 316.4,762 314.4,766.8" fill="#000" stroke="none"/>
<!-- 10 view left -->
<g stroke="#111" stroke-width="1.4">
<polygon points="344.9,757.2 346.4,750.5 354.8,750.5 357.3,757.2 355.6,763.8 346.4,763.8"/>
<polyline points="346.5,750.6 348.6,757.2 346.5,763.7"/><line x1="348.6" y1="757.2" x2="357.1" y2="757.2"/>
</g>
<polygon points="344.8,755.2 344.8,759.4 340.2,757.5" fill="#000" stroke="none"/>
<!-- 11 view front -->
<polygon points="375.2,754.7 381.9,757.2 381.9,765.3 375.2,762.9" fill="#111" stroke="none"/>
<g stroke="#111" stroke-width="1.5">
<polygon points="381.9,752 388.6,754.7 388.6,762.6 381.9,765.3 375.2,762.9 375.2,754.7"/>
<polyline points="375.3,754.8 381.9,757.2 388.5,754.8"/><line x1="381.9" y1="757.2" x2="381.9" y2="765.2"/>
</g>
<!-- 12 view back -->
<polygon points="415.1,752 421.6,754.4 421.6,761.4 415.1,757.4" fill="#111" stroke="none"/>
<g stroke="#111" stroke-width="1.5">
<polygon points="415.1,752 421.6,754.4 421.6,762.9 414.8,765.6 408.2,763.1 408.2,755.2"/>
<polyline points="408.3,755.3 415.1,757.4 421.5,754.5"/><line x1="415.1" y1="752" x2="415.1" y2="765.4"/>
</g>
<!-- 13 perspective -->
<g stroke="#111">
<rect x="447.6" y="758.6" width="9" height="8" stroke-width="2"/>
<polyline points="447.6,758.4 463.8,750.3 456.8,766.4" stroke-width="1.5"/><line x1="456.6" y1="758.6" x2="463.6" y2="750.6" stroke-width="1.2" stroke-dasharray="1.2 1"/>
</g>
<!-- 14 orthogonal (checked) -->
<rect x="472.5" y="744.5" width="31" height="30" rx="3" fill="#dadada" stroke="#b5b5b5" stroke-width="1"/>
<g stroke="#111" stroke-width="1.4">
<rect x="480.9" y="757.3" width="8.8" height="8.8"/><rect x="486" y="752.4" width="8.8" height="8.8"/>
<line x1="480.9" y1="757.3" x2="486" y2="752.4"/><line x1="489.7" y1="757.3" x2="494.8" y2="752.4"/><line x1="480.9" y1="766.1" x2="486" y2="761.2"/><line x1="489.7" y1="766.1" x2="494.8" y2="761.2"/>
</g>
<!-- 15 axes (checked) -->
<rect x="512.5" y="744.5" width="31" height="30" rx="3" fill="#dadada" stroke="#b5b5b5" stroke-width="1"/>
<g stroke="#111" stroke-width="1">
<line x1="527.8" y1="749" x2="527.8" y2="758.8"/><line x1="527.8" y1="758.6" x2="538.9" y2="758.6"/><line x1="527.8" y1="758.8" x2="520.3" y2="765.6"/>
</g>
<circle cx="527.9" cy="758.8" r="1.5" fill="#000" stroke="none"/>
<!-- 16 scale markers (checked) -->
<rect x="545.5" y="744.5" width="31" height="30" rx="3" fill="#dadada" stroke="#b5b5b5" stroke-width="1"/>
<g stroke="#111" stroke-width="1.2">
<line x1="560.9" y1="749" x2="560.9" y2="758.8"/><line x1="560.7" y1="758.6" x2="571.8" y2="758.6"/>
<line x1="560.9" y1="749.6" x2="563.2" y2="749.6"/><line x1="560.9" y1="752.4" x2="563.2" y2="752.4"/><line x1="560.9" y1="755.2" x2="563.2" y2="755.2"/>
<line x1="563.7" y1="758.6" x2="563.7" y2="756.6"/><line x1="566.6" y1="758.6" x2="566.6" y2="756.6"/><line x1="569.5" y1="758.6" x2="569.5" y2="756.6"/>
<line x1="560.5" y1="759" x2="553.2" y2="765.4" stroke-dasharray="1 0.8"/>
</g>
<g stroke="#111" stroke-width="1.3" fill="none"><polyline points="562.4,762 564.2,760.6 564.2,767"/><line x1="562.4" y1="766.6" x2="566" y2="766.6"/><rect x="567.6" y="761.2" width="3.6" height="5.4" rx="1.6"/></g>
<!-- 17 crosshairs -->
<g stroke="#666" stroke-width="1.1">
<rect x="587.8" y="753.7" width="12.4" height="10.6"/>
</g>
<g fill="#111" stroke="none">
<circle cx="587.8" cy="753.7" r="1.4"/><circle cx="600.2" cy="753.7" r="1.4"/><circle cx="587.8" cy="764.3" r="1.4"/><circle cx="600.2" cy="764.3" r="1.4"/>
</g>
<!-- splitter handle dots -->
<g fill="#b8b8b8" stroke="none">
<rect x="512" y="780.5" width="1" height="1"/><rect x="515" y="780.5" width="1" height="1"/><rect x="518" y="780.5" width="1" height="1"/><rect x="521" y="780.5" width="1" height="1"/><rect x="524" y="780.5" width="1" height="1"/>
</g>
</g>
</svg>


<!-- console -->
<div class="t" style="left:23px;top:785px;">Console</div>
<div class="abs" style="left:18px;top:810px;width:997px;height:138px;border:1px solid #b0b0b0;background:#fff;"></div>
<div class="t" style="left:23px;top:811px;">CGAL cache size in bytes: 62000
Compiling design (CSG Products normalization)...
Normalized tree has 89 elements!
Compile and preview finished.
Total rendering time: 0:00:00.260</div>
<svg width="1469" height="968" style="left:0;top:0;position:absolute">
<!-- console scrollbar -->
<rect x="1000.5" y="810.5" width="14" height="137" fill="#f7f7f7" stroke="#b3b3b3"/>
<rect x="1000.5" y="810.5" width="14" height="14" fill="#f9f9f9" stroke="#b3b3b3"/>
<polygon points="1003.2,819.8 1010.8,819.8 1007,815.6" fill="#444"/>
<rect x="1000.5" y="824.5" width="14" height="81.5" fill="#dcdcdc" stroke="#b3b3b3"/>
<rect x="1000.5" y="933.5" width="14" height="14" fill="#f9f9f9" stroke="#b3b3b3"/>
<polygon points="1003.2,937.8 1010.8,937.8 1007,942" fill="#444"/>
<!-- console float/close -->
<g fill="none" stroke="#555" stroke-width="1.2">
<rect x="988.6" y="792.6" width="10" height="10" rx="2.2"/>
<rect x="1002.6" y="792.6" width="10" height="10" rx="2.2"/>
<rect x="990.8" y="796.6" width="4.4" height="4.4" rx="1"/><path d="M992.6,796.6 v-1.6 a0.9,0.9 0 0 1 0.9,-0.9 h2.8 a0.9,0.9 0 0 1 0.9,0.9 v2.8 a0.9,0.9 0 0 1 -0.9,0.9 h-1.1"/>
</g>
<g stroke="#555" stroke-width="2"><line x1="1004.9" y1="795" x2="1010.4" y2="800.3"/><line x1="1010.4" y1="795" x2="1004.9" y2="800.3"/></g>
<!-- customizer float/close -->
<g fill="none" stroke="#555" stroke-width="1.2">
<rect x="1442.6" y="34.6" width="10" height="10" rx="2.2"/>
<rect x="1456.6" y="34.6" width="10" height="10" rx="2.2"/>
<rect x="1444.8" y="38.6" width="4.4" height="4.4" rx="1"/><path d="M1446.6,38.6 v-1.6 a0.9,0.9 0 0 1 0.9,-0.9 h2.8 a0.9,0.9 0 0 1 0.9,0.9 v2.8 a0.9,0.9 0 0 1 -0.9,0.9 h-1.1"/>
</g>
<g stroke="#555" stroke-width="2"><line x1="1458.9" y1="37" x2="1464.4" y2="42.3"/><line x1="1464.4" y1="37" x2="1458.9" y2="42.3"/></g>
</svg>

<!-- status bar -->
<div class="t" style="left:4px;top:949px;letter-spacing:0.11px;">rotate = [ 55.00 0.00 25.00 ], distance = 192.04, fov = 22.50 (997x713)</div>
<div class="t" style="left:1267px;top:949px;letter-spacing:0.3px;">OpenSCAD 2021.01</div>
<svg width="12" height="14" style="left:1457px;top:954px;position:absolute"><g fill="#c4c4c4"><rect x="9" y="2" width="1.2" height="1.2"/><rect x="6" y="5" width="1.2" height="1.2"/><rect x="9" y="5" width="1.2" height="1.2"/><rect x="3" y="8" width="1.2" height="1.2"/><rect x="6" y="8" width="1.2" height="1.2"/><rect x="9" y="8" width="1.2" height="1.2"/><rect x="0" y="11" width="1.2" height="1.2"/><rect x="3" y="11" width="1.2" height="1.2"/><rect x="6" y="11" width="1.2" height="1.2"/><rect x="9" y="11" width="1.2" height="1.2"/></g></svg>

<!-- customizer -->
<div class="abs" style="left:1015px;top:26px;width:454px;height:1px;background:#d8d8d8;"></div>
<div class="t" style="left:1025px;top:28px;">Customizer</div>
<div class="t" style="left:1040px;top:60px;">Automatic Preview</div>
<div class="btn" style="left:1210px;top:56px;width:171px;height:31px;"></div>
<div class="t" style="left:1215px;top:60px;">Show Details</div>
<div class="btn" style="left:1385px;top:56px;width:80px;height:31px;"></div>
<div class="t" style="left:1399px;top:60px;">Reset</div>

<div class="field" style="left:1021px;top:91px;width:254px;height:31px;background:linear-gradient(90deg,#fff 0,#fff 233px,#f0f0f0 233px,#ececec 100%);"></div>
<div class="abs" style="left:1254px;top:92px;width:1px;height:29px;background:#c8c8c8;"></div>
<div class="t" style="left:1025px;top:95px;">design default values</div>
<div class="t" style="left:1279px;top:96px;">*</div>
<div class="btn" style="left:1291px;top:91px;width:40px;height:31px;"></div>
<div class="t" style="left:1305px;top:95px;">+</div>
<div class="btn" style="left:1335px;top:91px;width:40px;height:31px;"></div>
<div class="t" style="left:1352px;top:95px;">-</div>
<div class="btn" style="left:1379px;top:91px;width:86px;height:31px;"></div>
<div class="t" style="left:1383px;top:97px;font-size:15px;line-height:18px;">save preset</div>

<!-- group frame -->
<div class="abs" style="left:1021px;top:126px;width:444px;height:822px;border:1px solid #b8b8b8;"></div>
<div class="grp" style="left:1022px;top:126px;width:443px;height:31px;"></div>
<div class="t" style="left:1043px;top:131px;">Dimensions</div>

<div class="t b" style="left:1026px;top:157px;">dot height</div>
<div class="t" style="left:1026px;top:180px;">Range 0.3 - 0.9</div>
<div class="t b" style="left:1026px;top:203px;">dot diameter</div>
<div class="t" style="left:1026px;top:226px;">Range 1.0 - 1.7</div>
<div class="t b" style="left:1026px;top:249px;">dot dist same cell</div>
<div class="t" style="left:1026px;top:272px;">Range 2.0 - 2.8</div>
<div class="t b" style="left:1026px;top:295px;">dot dist next cell</div>
<div class="t" style="left:1026px;top:317px;">Default is 6.0 but .0 isn't registered.</div>
<div class="t" style="left:1026px;top:340px;">Range 5.1 - 6.8</div>
<div class="t b" style="left:1026px;top:363px;">dot dist next row</div>
<div class="t" style="left:1026px;top:386px;">Range 10 - 15</div>

<div class="spin" style="left:1371px;top:165px;width:89px;height:29px;"><span>0.5</span></div>
<div class="spin" style="left:1371px;top:211px;width:89px;height:29px;"><span>1.5</span></div>
<div class="spin" style="left:1371px;top:257px;width:89px;height:29px;"><span>2.5</span></div>
<div class="spin" style="left:1371px;top:314px;width:89px;height:29px;"><span>6.1</span></div>
<div class="spin" style="left:1387px;top:371px;width:73px;height:29px;"><span>10</span></div>

<div class="grp" style="left:1022px;top:409px;width:443px;height:30px;"></div>
<div class="t" style="left:1043px;top:413px;">Input</div>
<div class="t b" style="left:1026px;top:439px;">line one</div>
<div class="t" style="left:1026px;top:462px;line-height:22px;">Lines without characters will be ignored.  Use
spaces to fill.</div>
<div class="field" style="left:1026px;top:508px;width:434px;height:30px;"></div>
<div class="t" style="left:1029px;top:511px;">H3llo</div>
<div class="t b" style="left:1026px;top:538px;">add line two</div>
<div class="chk" style="left:1440px;top:543px;width:20px;height:20px;"></div>
<div class="t b" style="left:1026px;top:569px;">line two</div>
<div class="field" style="left:1026px;top:592px;width:434px;height:31px;"></div>
<div class="t" style="left:1029px;top:596px;">W0rld!</div>
<div class="t b" style="left:1026px;top:623px;">add line three</div>
<div class="chk" style="left:1440px;top:628px;width:20px;height:20px;"></div>
<div class="t b" style="left:1026px;top:654px;">line three</div>
<div class="field" style="left:1026px;top:677px;width:434px;height:31px;"></div>
<div class="t b" style="left:1026px;top:708px;">add line four</div>
<div class="chk" style="left:1440px;top:713px;width:20px;height:20px;"></div>
<div class="t b" style="left:1026px;top:739px;">line four</div>
<div class="field" style="left:1026px;top:762px;width:434px;height:31px;"></div>
<div class="t b" style="left:1026px;top:793px;">Backing plate</div>
<div class="t" style="left:1026px;top:816px;line-height:22px;">The backing plate includes an empty cell on
both sides</div>
<div class="chk" style="left:1440px;top:816px;width:20px;height:20px;"></div>

<!-- customizer glyph overlay -->
<svg width="1469" height="968" style="left:0;top:0;position:absolute">
<rect x="1021.5" y="64.5" width="13" height="13" fill="#fafafa" stroke="#b9b9b9"/>
<polyline points="1024.2,70.5 1027.1,75 1031.8,67" fill="none" stroke="#000" stroke-width="1.9"/>
<polygon points="1366,69.4 1373.4,69.4 1369.7,73" fill="#555"/>
<polygon points="1259.8,104 1267.2,104 1263.5,107.6" fill="#777"/>
<polygon points="1028.7,140.2 1036.7,140.2 1032.7,143.9" fill="#404040"/>
<polygon points="1028.7,422.8 1036.7,422.8 1032.7,426.5" fill="#404040"/>
<g fill="none" stroke="#000" stroke-width="2.6" stroke-linecap="round" stroke-linejoin="round">
<polyline points="1444.4,552.2 1449.2,558.6 1456,546.6"/>
<polyline points="1444.4,825.6 1449.2,832 1456,820"/>
</g>
<g fill="#555">
<polygon points="1448,175.8 1456,175.8 1452,172.4"/><polygon points="1448,183.3 1456,183.3 1452,186.7"/>
<polygon points="1448,221.8 1456,221.8 1452,218.4"/><polygon points="1448,229.3 1456,229.3 1452,232.7"/>
<polygon points="1448,267.8 1456,267.8 1452,264.4"/><polygon points="1448,275.3 1456,275.3 1452,278.7"/>
<polygon points="1448,324.8 1456,324.8 1452,321.4"/><polygon points="1448,332.3 1456,332.3 1452,335.7"/>
<polygon points="1448,381.8 1456,381.8 1452,378.4"/><polygon points="1448,389.3 1456,389.3 1452,392.7"/>
</g>
</svg>
</body></html>
